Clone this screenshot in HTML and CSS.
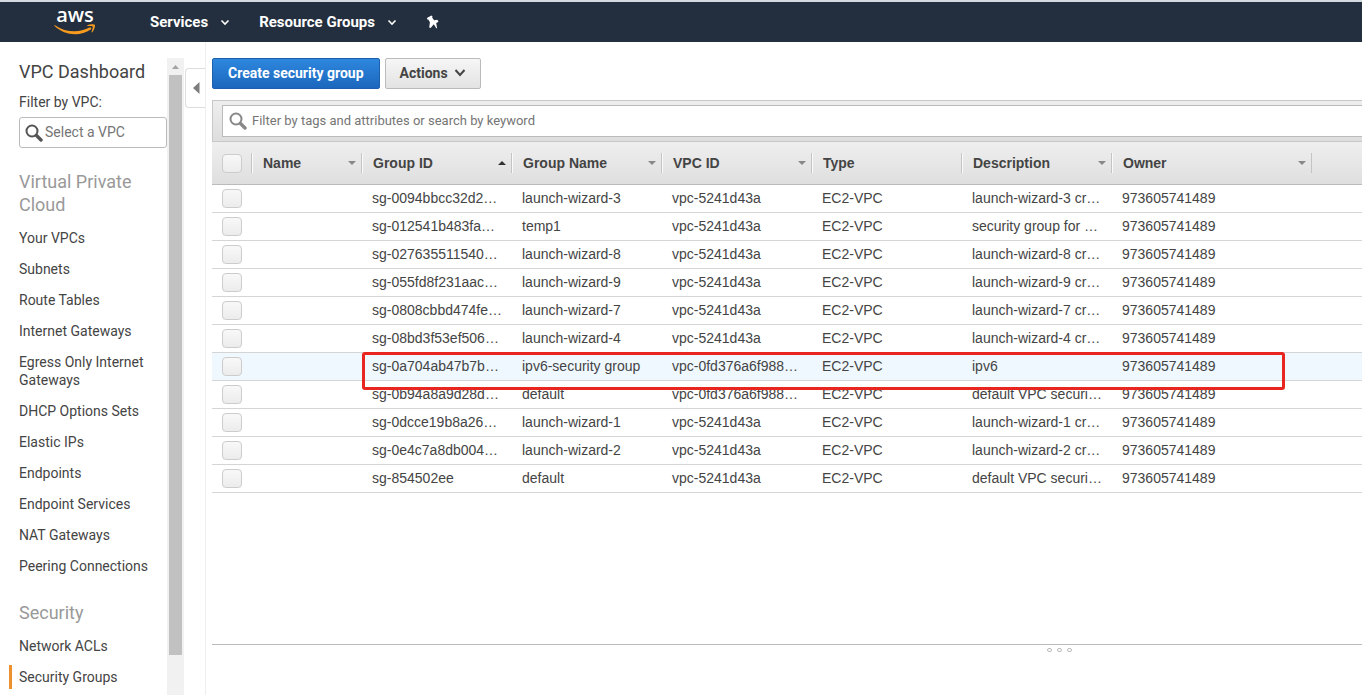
FILE: index.html
```
<!DOCTYPE html>
<html lang="en">
<head>
<meta charset="utf-8">
<title>VPC Dashboard - Security Groups</title>
<link rel="stylesheet" href="styles.css">
</head>
<body>
<header class="topnav">
  <a href="#" class="logo" aria-label="aws">
    <span class="logo-text">aws</span>
    <svg class="logo-smile" width="42" height="11" viewBox="0 0 42 11" aria-hidden="true">
      <path d="M1 1.2C12 8.8 25 9 35.6 3.6c1.400-.7 2.400.9 1.200 1.800C26 12.800 10.500 11.500.6 1.900c-.5-.5-.1-1 .4-.7z" fill="#f79a1e"/>
      <path d="M33.500 1.200c2.400-1.300 6.600-1.300 7.200-.5.700 1-.2 5.300-2.500 7.500-.5.400-.9.100-.7-.4.800-1.900 1.600-4.500 1.100-5.200-.5-.6-3.200-.5-4.800-.4-.6 0-.8-.6-.3-1z" fill="#f79a1e"/>
    </svg>
  </a>
  <nav class="menu">
    <button type="button" class="menu-item">Services
      <svg width="10" height="7" viewBox="0 0 10 7" aria-hidden="true"><path d="M1.500 1.500 5 5l3.500-3.500" fill="none" stroke="#fff" stroke-width="1.600"/></svg>
    </button>
    <button type="button" class="menu-item">Resource Groups
      <svg width="10" height="7" viewBox="0 0 10 7" aria-hidden="true"><path d="M1.500 1.500 5 5l3.500-3.500" fill="none" stroke="#fff" stroke-width="1.600"/></svg>
    </button>
    <button type="button" class="menu-item" aria-label="Pin shortcuts">
      <svg width="14" height="14" viewBox="0 0 14 14" aria-hidden="true"><path d="M1.300 2.700 5.500.6l1 .9-.3 1.300 2 2.500 2.900-.6 1.200 1.200-.1 1-2 1 .9 5.300-.8.100-2.500-4-3.200 3.700-1.400-.4.700-5.400-1.600-2.600-1.400-.3z" fill="#fff"/></svg>
    </button>
  </nav>
</header>
<div class="page">
  <aside class="sidebar">
    <div class="side-content">
      <h1 class="side-title">VPC Dashboard</h1>
      <label class="side-label" for="vpc">Filter by VPC:</label>
      <div class="vpc-filter">
        <svg width="18" height="18" viewBox="0 0 18 18" aria-hidden="true"><circle cx="7" cy="7" r="5.500" fill="none" stroke="#555" stroke-width="2"/><path d="m11.500 11.500 4.500 4.500" stroke="#555" stroke-width="3.400" stroke-linecap="round"/></svg>
        <input id="vpc" type="text" placeholder="Select a VPC">
      </div>
      <h2 class="side-heading">Virtual Private Cloud</h2>
      <ul class="side-list">
        <li><a href="#">Your VPCs</a></li>
        <li><a href="#">Subnets</a></li>
        <li><a href="#">Route Tables</a></li>
        <li><a href="#">Internet Gateways</a></li>
        <li><a href="#">Egress Only Internet Gateways</a></li>
        <li><a href="#">DHCP Options Sets</a></li>
        <li><a href="#">Elastic IPs</a></li>
        <li><a href="#">Endpoints</a></li>
        <li><a href="#">Endpoint Services</a></li>
        <li><a href="#">NAT Gateways</a></li>
        <li><a href="#">Peering Connections</a></li>
      </ul>
      <h2 class="side-heading">Security</h2>
      <ul class="side-list">
        <li><a href="#">Network ACLs</a></li>
        <li class="current"><a href="#">Security Groups</a></li>
      </ul>
    </div>
    <div class="scrollbar" aria-hidden="true">
      <span class="scroll-up"></span>
      <span class="scroll-thumb"></span>
    </div>
    <div class="gutter">
      <button type="button" class="collapse" aria-label="Collapse sidebar"><svg width="7" height="12" viewBox="0 0 7 12" aria-hidden="true"><path d="M6.500 0v12L0 6z" fill="#7d7d7d"/></svg></button>
    </div>
  </aside>
  <main class="main">
    <div class="actions">
      <button type="button" class="btn btn-primary">Create security group</button>
      <button type="button" class="btn">Actions
        <svg width="12" height="8" viewBox="0 0 12 8" aria-hidden="true"><path d="M1.500 1 6 6l4.500-5" fill="none" stroke="#444" stroke-width="2"/></svg>
      </button>
    </div>
    <div class="filterbar">
      <div class="search">
        <svg width="18" height="18" viewBox="0 0 18 18" aria-hidden="true"><circle cx="7" cy="7" r="5.500" fill="none" stroke="#888" stroke-width="2"/><path d="m11.500 11.500 4.500 4.500" stroke="#888" stroke-width="3.400" stroke-linecap="round"/></svg>
        <input type="text" aria-label="Filter" placeholder="Filter by tags and attributes or search by keyword">
      </div>
    </div>
    <div class="grid">
      <table class="groups">
        <colgroup><col class="c-check"><col class="c-name"><col class="c-std"><col class="c-std"><col class="c-std"><col class="c-std"><col class="c-std"><col class="c-owner"><col></colgroup>
        <thead>
          <tr>
            <th><input type="checkbox" class="tick" aria-label="Select all"></th>
            <th><div class="head">Name<i class="sort"></i></div></th>
            <th><div class="head">Group ID<i class="sort sort-up"></i></div></th>
            <th><div class="head">Group Name<i class="sort"></i></div></th>
            <th><div class="head">VPC ID<i class="sort"></i></div></th>
            <th><div class="head">Type</div></th>
            <th><div class="head">Description<i class="sort"></i></div></th>
            <th><div class="head">Owner<i class="sort"></i></div></th>
            <th></th>
          </tr>
        </thead>
        <tbody>
          <tr><td><input type="checkbox" class="tick" aria-label="Select row 1"></td><td></td><td>sg-0094bbcc32d2…</td><td>launch-wizard-3</td><td>vpc-5241d43a</td><td>EC2-VPC</td><td>launch-wizard-3 cr…</td><td>973605741489</td><td></td></tr>
          <tr><td><input type="checkbox" class="tick" aria-label="Select row 2"></td><td></td><td>sg-012541b483fa…</td><td>temp1</td><td>vpc-5241d43a</td><td>EC2-VPC</td><td>security group for …</td><td>973605741489</td><td></td></tr>
          <tr><td><input type="checkbox" class="tick" aria-label="Select row 3"></td><td></td><td>sg-027635511540…</td><td>launch-wizard-8</td><td>vpc-5241d43a</td><td>EC2-VPC</td><td>launch-wizard-8 cr…</td><td>973605741489</td><td></td></tr>
          <tr><td><input type="checkbox" class="tick" aria-label="Select row 4"></td><td></td><td>sg-055fd8f231aac…</td><td>launch-wizard-9</td><td>vpc-5241d43a</td><td>EC2-VPC</td><td>launch-wizard-9 cr…</td><td>973605741489</td><td></td></tr>
          <tr><td><input type="checkbox" class="tick" aria-label="Select row 5"></td><td></td><td>sg-0808cbbd474fe…</td><td>launch-wizard-7</td><td>vpc-5241d43a</td><td>EC2-VPC</td><td>launch-wizard-7 cr…</td><td>973605741489</td><td></td></tr>
          <tr><td><input type="checkbox" class="tick" aria-label="Select row 6"></td><td></td><td>sg-08bd3f53ef506…</td><td>launch-wizard-4</td><td>vpc-5241d43a</td><td>EC2-VPC</td><td>launch-wizard-4 cr…</td><td>973605741489</td><td></td></tr>
          <tr class="hover"><td><input type="checkbox" class="tick" aria-label="Select row 7"></td><td></td><td>sg-0a704ab47b7b…</td><td>ipv6-security group</td><td>vpc-0fd376a6f988…</td><td>EC2-VPC</td><td>ipv6</td><td>973605741489</td><td></td></tr>
          <tr><td><input type="checkbox" class="tick" aria-label="Select row 8"></td><td></td><td>sg-0b94a8a9d28d…</td><td>default</td><td>vpc-0fd376a6f988…</td><td>EC2-VPC</td><td>default VPC securi…</td><td>973605741489</td><td></td></tr>
          <tr><td><input type="checkbox" class="tick" aria-label="Select row 9"></td><td></td><td>sg-0dcce19b8a26…</td><td>launch-wizard-1</td><td>vpc-5241d43a</td><td>EC2-VPC</td><td>launch-wizard-1 cr…</td><td>973605741489</td><td></td></tr>
          <tr><td><input type="checkbox" class="tick" aria-label="Select row 10"></td><td></td><td>sg-0e4c7a8db004…</td><td>launch-wizard-2</td><td>vpc-5241d43a</td><td>EC2-VPC</td><td>launch-wizard-2 cr…</td><td>973605741489</td><td></td></tr>
          <tr><td><input type="checkbox" class="tick" aria-label="Select row 11"></td><td></td><td>sg-854502ee</td><td>default</td><td>vpc-5241d43a</td><td>EC2-VPC</td><td>default VPC securi…</td><td>973605741489</td><td></td></tr>
        </tbody>
      </table>
      <div class="marker"></div>
    </div>
    <div class="splitter"><i></i><i></i><i></i></div>
  </main>
</div>
</body>
</html>
```

FILE: styles.css
```
* { box-sizing: border-box; }
body {
  margin: 0;
  height: 100vh;
  display: flex;
  flex-direction: column;
  overflow: hidden;
  background: #fff;
  color: #444;
  font: 14px/18px Roboto, "Liberation Sans", sans-serif;
}
button, input { font: inherit; color: inherit; margin: 0; }
a { color: inherit; text-decoration: none; }
svg { display: block; flex: none; }
h1, h2, ul { margin: 0; padding: 0; font-weight: 400; list-style: none; }

/* Top bar */
.topnav {
  flex: none;
  display: flex;
  height: 42px;
  padding-left: 54px;
  background: #232f3e;
  border-top: 2px solid #d3dae0;
}
.logo {
  width: 96px;
  padding-top: 3px;
  color: #fff;
}
.logo-text {
  display: block;
  width: 42px;
  text-align: center;
  font: 600 20px/19px "Open Sans", sans-serif;
}
.menu { display: flex; align-items: center; gap: 29px; }
.menu-item {
  display: flex;
  align-items: center;
  gap: 12px;
  padding: 0;
  border: 0;
  background: none;
  color: #fff;
  font-size: 15px;
  font-weight: 700;
}

/* Sidebar */
.page { flex: 1; min-height: 0; display: flex; }
.sidebar { flex: none; display: flex; width: 205px; padding-top: 16px; }
.side-content { flex: none; width: 167px; padding-left: 19px; }
.side-title { font-size: 18px; line-height: 28px; margin-bottom: 7px; }
.side-label { display: block; margin-bottom: 6px; }
.vpc-filter {
  display: flex;
  align-items: center;
  gap: 2px;
  height: 31px;
  padding-left: 5px;
  border: 1px solid #bbb;
  border-radius: 3px;
}
.vpc-filter input, .search input {
  flex: 1;
  min-width: 0;
  border: 0;
  padding: 0 0 1px;
  outline: 0;
  background: none;
}
input::placeholder { color: #757575; opacity: 1; }
.side-heading {
  margin: 22px 0 13px;
  font-size: 18px;
  line-height: 23px;
  color: #999;
}
.side-list { display: flex; flex-direction: column; gap: 13px; }
.side-list + .side-heading { margin-top: 26px; }
.side-list a { display: block; }
.current {
  margin: -3px 0 -3px -10px;
  padding: 3px 0 3px 7px;
  border-left: 3px solid #ec912d;
}
.scrollbar { flex: none; width: 17px; padding: 0 2px; background: #f1f1f1; }
.scroll-up {
  display: block;
  height: 17px;
  border: solid transparent;
  border-width: 7px 3px 6px;
}
.scroll-up::before {
  content: "";
  display: block;
  width: 7px;
  height: 4px;
  background: #a3a3a3;
  clip-path: polygon(50% 0, 100% 100%, 0 100%);
}
.scroll-thumb { display: block; height: 91%; background: #c1c1c1; }
.gutter { flex: 1; margin-top: -16px; padding: 26px 0 0 1px; border-right: 1px solid #eee; }
.collapse {
  display: flex;
  align-items: center;
  width: 20px;
  height: 40px;
  padding: 0 0 0 7px;
  border: 1px solid #ddd;
  border-right: 0;
  border-radius: 4px 0 0 4px;
  background: #fff;
}

/* Main panel */
.main { flex: 1; min-width: 0; display: flex; flex-direction: column; padding: 16px 0 0 7px; }
.actions { display: flex; gap: 5px; }
.btn {
  display: flex;
  align-items: center;
  gap: 6px;
  height: 31px;
  padding: 0 14px 1px;
  border: 1px solid #bbb;
  border-radius: 2px;
  background: linear-gradient(#f6f6f6, #e3e3e3);
  font-weight: 700;
}
.btn-primary {
  padding: 0 15px 1px;
  border-color: #1b5fae;
  background: linear-gradient(#2e87de, #1b67bd);
  color: #fff;
}
.filterbar {
  margin-top: 11px;
  padding: 4px 0 4px 9px;
  border: solid #c8c8c8;
  border-width: 1px 0 1px 1px;
  background: linear-gradient(#eee, #ddd);
}
.search {
  display: flex;
  align-items: center;
  gap: 5px;
  height: 32px;
  padding-left: 6px;
  border: 1px solid #bbb;
  border-right: 0;
  background: #fff;
  font-size: 13px;
}
.grid { position: relative; flex: 1; min-height: 0; overflow: hidden; }
.groups {
  width: 100%;
  table-layout: fixed;
  border-collapse: separate;
  border-spacing: 0;
  font-family: "Liberation Sans", Arial, sans-serif;
}
.c-check { width: 40px; }
.c-name { width: 110px; }
.c-std { width: 150px; }
.c-owner { width: 200px; }
th { height: 43px; padding: 0; border-bottom: 1px solid #bbb; text-align: left; }
thead tr { background: linear-gradient(#efefef, #dedede); }
.head {
  display: flex;
  align-items: center;
  justify-content: space-between;
  height: 20px;
  padding: 0 6px 0 10px;
  border-left: 1px solid #fafafa;
}
th:not(:last-child) { background: linear-gradient(#c4c4c4, #c4c4c4) right center / 1px 20px no-repeat; }
.sort {
  width: 8px;
  height: 4px;
  background: #888;
  clip-path: polygon(0 0, 100% 0, 50% 100%);
}
.sort-up { background: #333; clip-path: polygon(50% 0, 100% 100%, 0 100%); }
td {
  height: 28px;
  padding: 0 0 2px 10px;
  border-bottom: 1px solid #d5d5d5;
  white-space: nowrap;
}
td:first-child, th:first-child { padding: 0 0 0 10px; }
.hover td { background: #f0f8ff; }
.tick {
  appearance: none;
  display: block;
  width: 20px;
  height: 19px;
  border: 1px solid #ccc;
  border-radius: 4px;
  background: linear-gradient(#f8f8f8, #ececec);
}
/* Callout drawn over the table */
.marker {
  position: absolute;
  left: 150px;
  top: 210px;
  width: 923px;
  height: 38px;
  border: 3px solid #e8251f;
  border-radius: 3px;
}
.splitter {
  flex: none;
  display: flex;
  gap: 5px;
  height: 51px;
  padding: 3px 0 0 835px;
  border-top: 1px solid #bbb;
}
.splitter i { width: 5px; height: 4px; border: 1px solid #bbb; border-radius: 2px; }
```
